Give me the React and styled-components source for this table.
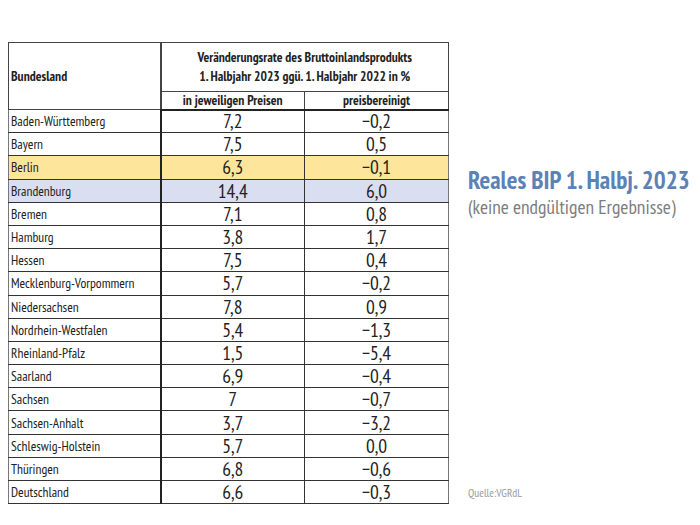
import styled, { createGlobalStyle } from "styled-components";

const GlobalStyle = createGlobalStyle`
  html, body {
    margin: 0;
    padding: 0;
    background: #ffffff;
  }
  body {
    font-family: "PT Sans Narrow", "Liberation Sans Narrow", "DejaVu Sans Condensed", "Liberation Sans", sans-serif;
  }
`;

const rows = [
  ["Baden-Württemberg", "7,2", "−0,2"],
  ["Bayern", "7,5", "0,5"],
  ["Berlin", "6,3", "−0,1", "berlin"],
  ["Brandenburg", "14,4", "6,0", "brandenburg"],
  ["Bremen", "7,1", "0,8"],
  ["Hamburg", "3,8", "1,7"],
  ["Hessen", "7,5", "0,4"],
  ["Mecklenburg-Vorpommern", "5,7", "−0,2"],
  ["Niedersachsen", "7,8", "0,9"],
  ["Nordrhein-Westfalen", "5,4", "−1,3"],
  ["Rheinland-Pfalz", "1,5", "−5,4"],
  ["Saarland", "6,9", "−0,4"],
  ["Sachsen", "7", "−0,7"],
  ["Sachsen-Anhalt", "3,7", "−3,2"],
  ["Schleswig-Holstein", "5,7", "0,0"],
  ["Thüringen", "6,8", "−0,6"],
  ["Deutschland", "6,6", "−0,3"],
];

const highlight = {
  berlin: "#fde59c",
  brandenburg: "#d9dff1",
};

const Page = styled.div`
  display: flex;
  align-items: flex-start;
  padding: 42px 0 0 8px;
  width: 700px;
  height: 525px;
  box-sizing: border-box;
`;

const Table = styled.table`
  border-collapse: collapse;
  width: 440px;
  table-layout: fixed;
  border: 1px solid #777;
  color: #222;
`;

const HeadCell = styled.th`
  font-size: 13.5px;
  font-weight: bold;
  border: 1px solid #444;
  border-left-width: ${(p) => (p.$split ? "2px" : "1px")};
  text-align: ${(p) => (p.$left ? "left" : "center")};
  padding: ${(p) => (p.$left ? "0 0 0 2px" : "0")};
  line-height: 19px;
`;

const TitleRow = styled.tr`
  height: 49px;
`;

const SubRow = styled.tr`
  height: 18px;
  & th {
    border-bottom: 2px solid #222;
    line-height: 16px;
  }
`;

const Row = styled.tr`
  height: 23.2px;
  background: ${(p) => p.$bg || "transparent"};
`;

const NameCell = styled.td`
  font-size: 13.5px;
  padding: 0 0 0 2px;
  line-height: 18px;
  border-top: 1px solid #333;
  border-bottom: 1px solid #333;
  white-space: nowrap;
`;

const NumCell = styled.td`
  font-size: 19.5px;
  font-weight: 300;
  text-align: center;
  padding: 0;
  line-height: 20px;
  border-top: 1px solid #333;
  border-bottom: 1px solid #333;
  border-left: ${(p) => (p.$split ? "2px solid #222" : "1px solid #333")};
`;

const Side = styled.div`
  flex: 1;
  display: flex;
  flex-direction: column;
  padding: 124px 0 4px 19px;
  height: 462px;
  box-sizing: border-box;
`;

const Headline = styled.div`
  font-size: 25px;
  line-height: 29px;
  font-weight: bold;
  color: #5a82b6;
  white-space: nowrap;
`;

const Subline = styled.div`
  font-size: 19.5px;
  line-height: 24px;
  color: #7d7d7d;
  white-space: nowrap;
`;

const Source = styled.div`
  margin-top: auto;
  font-size: 11.4px;
  line-height: 14px;
  color: #9a9a9a;
`;

export default function App() {
  return (
    <>
      <GlobalStyle />
      <Page>
        <Table>
          <colgroup>
            <col style={{ width: 152 }} />
            <col style={{ width: 144 }} />
            <col style={{ width: 144 }} />
          </colgroup>
          <thead>
            <TitleRow>
              <HeadCell rowSpan={2} $left>Bundesland</HeadCell>
              <HeadCell colSpan={2} $split>
                Veränderungsrate des Bruttoinlandsprodukts
                <br />
                1. Halbjahr 2023 ggü. 1. Halbjahr 2022 in %
              </HeadCell>
            </TitleRow>
            <SubRow>
              <HeadCell $split>in jeweiligen Preisen</HeadCell>
              <HeadCell>preisbereinigt</HeadCell>
            </SubRow>
          </thead>
          <tbody>
            {rows.map(([name, nominal, real, mark]) => (
              <Row key={name} $bg={highlight[mark]}>
                <NameCell>{name}</NameCell>
                <NumCell $split>{nominal}</NumCell>
                <NumCell>{real}</NumCell>
              </Row>
            ))}
          </tbody>
        </Table>
        <Side>
          <Headline>Reales BIP 1. Halbj. 2023</Headline>
          <Subline>(keine endgültigen Ergebnisse)</Subline>
          <Source>Quelle:VGRdL</Source>
        </Side>
      </Page>
    </>
  );
}
